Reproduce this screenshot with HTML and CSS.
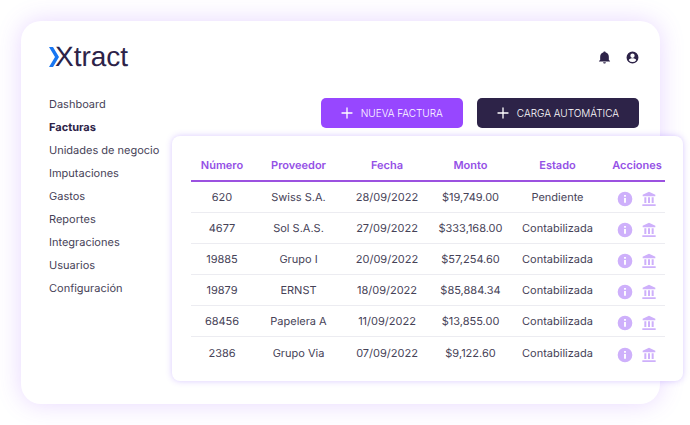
FILE: index.html
```html
<!DOCTYPE html>
<html lang="es">

<head>
    <meta charset="UTF-8">
    <meta name="viewport" content="width=device-width, initial-scale=1.0">
    <title>Xtract - Facturas</title>
    <link rel="stylesheet" href="styles.css">
</head>

<body>
    <!-- Shared icons -->
    <svg class="sprite" aria-hidden="true">
        <symbol id="icon-info" viewBox="0 0 24 24">
            <path d="M12 1a11 11 0 1 0 0 22 11 11 0 0 0 0-22zm1.4 16.5h-2.8v-7h2.8zm0-8.8h-2.8V6h2.8z" />
        </symbol>
        <symbol id="icon-bank" viewBox="0 0 24 24">
            <path d="M12 1L2.500 5.500v2.500h19V5.500zM5 9.500h3V18H5zM10.500 9.500h3V18h-3zM16 9.500h3V18h-3zM2 20h20v2.500H2z" />
        </symbol>
        <symbol id="icon-plus" viewBox="0 0 12 12">
            <path d="M6 1v10M1 6h10" fill="none" stroke="currentColor" stroke-width="1.300" stroke-linecap="round" />
        </symbol>
    </svg>

    <div class="app">
        <header class="header">
            <a class="logo" href="#">
                <svg class="logo-mark" viewBox="0 0 10 20" aria-hidden="true">
                    <path d="M0 0h4l6 10-6 10H0l6-10z" fill="#1877f2" />
                </svg>
                <span>Xtract</span>
            </a>
            <div class="header-actions">
                <button class="icon-button" type="button" aria-label="Notificaciones">
                    <svg viewBox="0 0 24 24"><path d="M12 23c1.400 0 2.500-1 2.500-2.300h-5C9.500 22 10.600 23 12 23zM20 16.500V10.500c0-4-2.200-7-5.800-7.800C14.200 1.500 13.200.8 12 .8s-2.200.7-2.200 1.900C6.200 3.500 4 6.500 4 10.500v6L1.800 18.500v1h20.400v-1z" /></svg>
                </button>
                <button class="icon-button" type="button" aria-label="Cuenta">
                    <svg viewBox="0 0 24 24"><path d="M12 1a11 11 0 1 0 0 22 11 11 0 0 0 0-22zm0 3.800a4 4 0 1 1 0 8 4 4 0 0 1 0-8zM12 20.500a8 8 0 0 1-6.800-3.600c0-2.200 4.500-3.300 6.800-3.300s6.800 1.100 6.800 3.300A8 8 0 0 1 12 20.500z" /></svg>
                </button>
            </div>
        </header>

        <div class="content">
            <nav class="sidebar">
                <a href="#">Dashboard</a>
                <a class="active" href="#">Facturas</a>
                <a href="#">Unidades de negocio</a>
                <a href="#">Imputaciones</a>
                <a href="#">Gastos</a>
                <a href="#">Reportes</a>
                <a href="#">Integraciones</a>
                <a href="#">Usuarios</a>
                <a href="#">Configuración</a>
            </nav>

            <main class="main">
                <div class="toolbar">
                    <button class="btn btn-primary" type="button"><svg><use href="#icon-plus" /></svg>NUEVA FACTURA</button>
                    <button class="btn btn-dark" type="button"><svg><use href="#icon-plus" /></svg>CARGA AUTOMÁTICA</button>
                </div>

                <section class="panel">
                    <table class="invoices">
                        <colgroup>
                            <col class="col-number">
                            <col class="col-supplier">
                            <col class="col-date">
                            <col class="col-amount">
                            <col class="col-status">
                            <col class="col-actions">
                        </colgroup>
                        <thead>
                            <tr>
                                <th>Número</th>
                                <th>Proveedor</th>
                                <th>Fecha</th>
                                <th>Monto</th>
                                <th>Estado</th>
                                <th class="actions">Acciones</th>
                            </tr>
                        </thead>
                        <tbody id="invoice-rows"></tbody>
                    </table>
                </section>
            </main>
        </div>
    </div>

    <script src="script.js"></script>
</body>

</html>
```
FILE: styles.css
```css
* {
    box-sizing: border-box;
}

body {
    font-family: Inter, sans-serif;
    font-size: 11px;
    color: #464257;
    text-rendering: geometricPrecision;
    margin: 0;
    padding: 21px 30px 21px 21px;
    background: white;
}

button {
    font-family: inherit;
    border: none;
    cursor: pointer;
}

.sprite {
    display: none;
}

.app {
    background: white;
    border-radius: 20px;
    box-shadow: 0 0 24px rgba(151, 71, 255, 0.22);
    padding: 20px 21px 23px 28px;
}

.header {
    display: flex;
    justify-content: space-between;
    align-items: center;
    height: 32px;
}

.logo {
    display: flex;
    align-items: center;
    font-family: "Liberation Sans", Arial, sans-serif;
    font-size: 28px;
    line-height: 32px;
    color: #2d2348;
    text-decoration: none;
}

.logo-mark {
    width: 10px;
    height: 20px;
    margin-right: -4px;
}

.header-actions {
    display: flex;
    gap: 15px;
}

.icon-button {
    display: flex;
    padding: 0;
    background: none;
}

.icon-button svg {
    width: 13px;
    height: 13px;
    fill: #2d2348;
}

.content {
    display: flex;
    margin-top: 25px;
}

.sidebar {
    display: flex;
    flex-direction: column;
    flex: 0 0 123px;
    margin-top: -5px;
}

.sidebar a {
    color: inherit;
    line-height: 23px;
    text-decoration: none;
    white-space: nowrap;
}

.sidebar .active {
    font-weight: 700;
    color: #2d2348;
}

.main {
    flex: 1;
    min-width: 0;
}

.toolbar {
    display: flex;
    justify-content: flex-end;
    gap: 14px;
}

.btn {
    display: flex;
    align-items: center;
    gap: 8px;
    height: 30px;
    padding: 0 20px;
    border-radius: 5px;
    font-size: 10px;
    font-weight: 300;
    color: white;
}

.btn svg {
    width: 12px;
    height: 12px;
}

.btn-primary {
    background: #9747ff;
}

.btn-dark {
    background: #2d2348;
}

.panel {
    margin: 8px -44px 0 0;
    padding: 13px 19px 13px;
    background: white;
    border-radius: 8px;
    box-shadow: 0 0 6px rgba(130, 80, 255, 0.3);
}

.invoices {
    width: 100%;
    table-layout: fixed;
    border-collapse: separate;
    border-spacing: 0;
    text-align: center;
}

.invoices th,
.invoices td {
    padding: 0;
    height: 31px;
}

.invoices th {
    height: 33px;
    font-weight: 600;
    color: #9450e6;
    border-bottom: 2px solid #9b51e0;
}

.invoices td {
    border-bottom: 1px solid #ececf1;
}

.invoices tr:last-child td {
    border-bottom: none;
}

.invoices .actions {
    padding-left: 5px;
}

.col-number {
    width: 62px;
}

.col-supplier {
    width: 91px;
}

.col-date {
    width: 86px;
}

.col-amount {
    width: 81px;
}

.col-status {
    width: 93px;
}

.col-actions {
    width: 61px;
}

.row-actions {
    display: flex;
    justify-content: center;
    gap: 8px;
    padding-top: 4px;
}

.row-actions svg {
    width: 16px;
    height: 16px;
    fill: #ceb0fb;
}
```
FILE: script.js
```javascript
const invoices = [
    ["620", "Swiss S.A.", "28/09/2022", "$19,749.00", "Pendiente"],
    ["4677", "Sol S.A.S.", "27/09/2022", "$333,168.00", "Contabilizada"],
    ["19885", "Grupo I", "20/09/2022", "$57,254.60", "Contabilizada"],
    ["19879", "ERNST", "18/09/2022", "$85,884.34", "Contabilizada"],
    ["68456", "Papelera A", "11/09/2022", "$13,855.00", "Contabilizada"],
    ["2386", "Grupo Via", "07/09/2022", "$9,122.60", "Contabilizada"]
];

// Render one table row per invoice
document.getElementById("invoice-rows").innerHTML = invoices.map(invoice => `
    <tr>
        ${invoice.map(value => `<td>${value}</td>`).join("")}
        <td class="actions">
            <div class="row-actions">
                <button class="icon-button" type="button" aria-label="Ver detalle"><svg><use href="#icon-info" /></svg></button>
                <button class="icon-button" type="button" aria-label="Banco"><svg><use href="#icon-bank" /></svg></button>
            </div>
        </td>
    </tr>
`).join("");
```
